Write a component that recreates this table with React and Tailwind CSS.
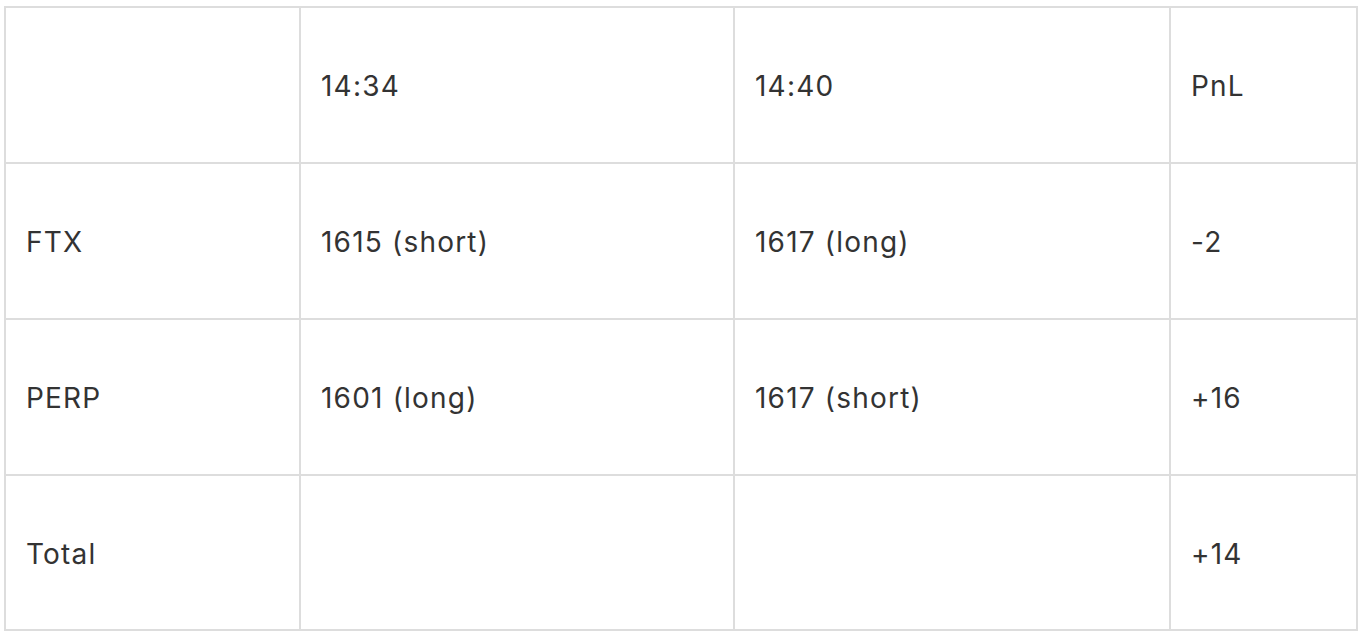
const rows = [
    ['', '14:34', '14:40', 'PnL'],
    ['FTX', '1615 (short)', '1617 (long)', '-2'],
    ['PERP', '1601 (long)', '1617 (short)', '+16'],
    ['Total', '', '', '+14'],
];

export default function App() {
    return (
        <div className="min-h-screen bg-white pl-[4px] pt-[6px]" style={{ fontFamily: 'Inter, "Noto Sans", sans-serif' }}>
            {/* PnL table */}
            <div className="grid w-[1354px] grid-cols-[295px_434px_436px_189px] border-r-2 border-b-2 border-[#dddddd] text-[28px] tracking-[1.2px] text-[#333333]">
                {rows.map((row, r) =>
                    row.map((cell, c) => (
                        <div
                            key={`${r}-${c}`}
                            className={`flex items-center border-t-2 border-l-2 border-[#dddddd] pl-[20px] pt-[2px] ${r === 3 ? 'h-[155px]' : 'h-[156px]'}`}
                        >
                            {cell}
                        </div>
                    ))
                )}
            </div>
        </div>
    );
}
